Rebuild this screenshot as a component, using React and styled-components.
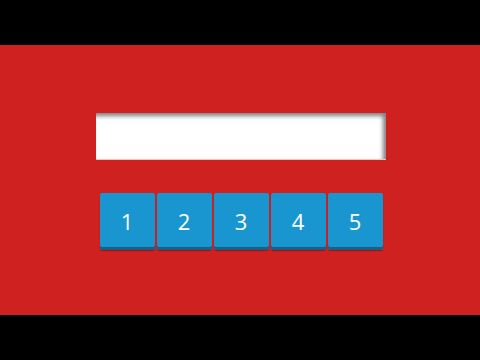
import React from 'react'
import styled, { createGlobalStyle } from 'styled-components'

const GlobalStyle = createGlobalStyle`
    html, body {
        margin: 0;
        padding: 0;
        background: #000;
    }
`

const Screen = styled.div`
    width: 480px;
    height: 360px;
    background-color: #000;
    display: flex;
    flex-direction: column;
    justify-content: center;
`
const Stage = styled.div`
    height: 270px;
    background-color: #cf2120;
    display: flex;
    flex-direction: column;
    align-items: center;
    padding-top: 68px;
    padding-left: 2px;
    box-sizing: border-box;
`
const Display = styled.input`
    width: 290px;
    height: 47px;
    box-sizing: border-box;
    border: none;
    border-bottom: 1px solid #f1c4c4;
    border-radius: 1px;
    background: #fff;
    box-shadow: inset -3px 3px 4px rgba(0, 0, 0, 0.5);
    outline: none;
    margin: 0;
`
const Keys = styled.div`
    display: flex;
    gap: 2px;
    margin-top: 33px;
`
const Key = styled.button`
    width: 55px;
    height: 57px;
    box-sizing: border-box;
    border: none;
    border-radius: 2px;
    background-color: #1996cf;
    box-shadow: inset 0 -3px 0 #1b5f85, 0 1px 1px rgba(0, 0, 0, 0.3);
    color: #fff;
    font-family: "Open Sans", "Liberation Sans", sans-serif;
    font-size: 22px;
    padding: 0 0 1px;
    cursor: pointer;
`

const App = () => {
    const keys = [1, 2, 3, 4, 5]
    return (
        <Screen>
            <GlobalStyle />
            <Stage>
                <Display type='text' readOnly />
                <Keys>
                    {keys.map((k) => (
                        <Key key={k}>{k}</Key>
                    ))}
                </Keys>
            </Stage>
        </Screen>
    )
}

export default App
